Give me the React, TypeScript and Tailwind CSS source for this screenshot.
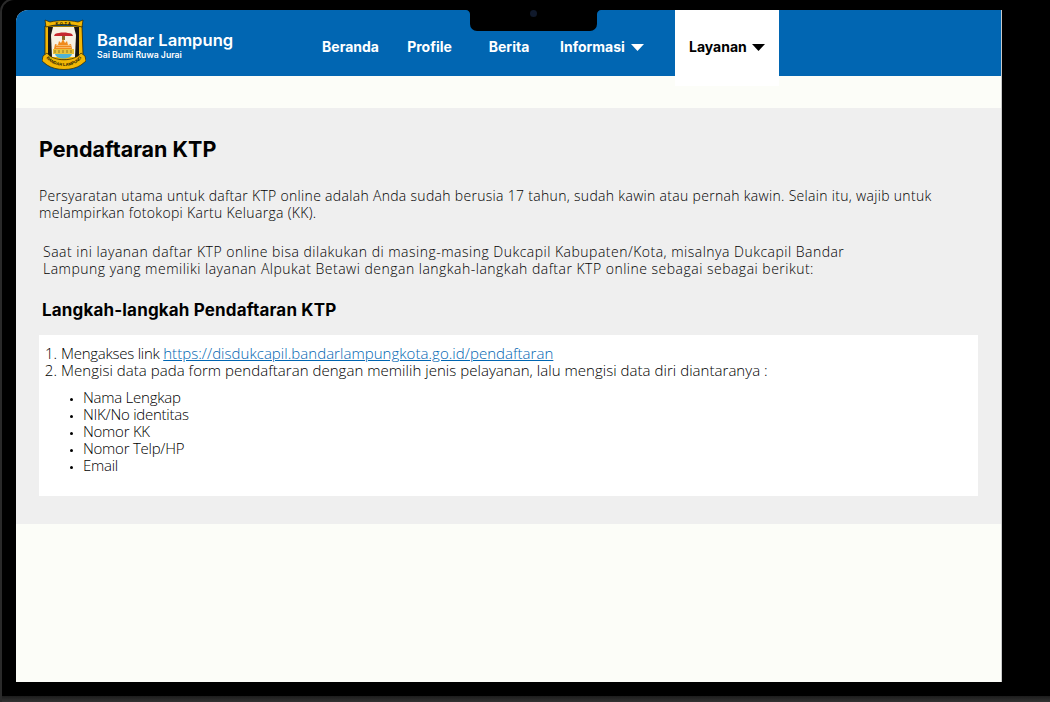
const navItems = [
  { label: 'Beranda', w: 'w-[85px]' },
  { label: 'Profile', w: 'w-[73px]' },
  { label: 'Berita', w: 'w-[86px]' },
];

function Caret({ color }: { color: string }) {
  return (
    <svg width="13" height="7" viewBox="0 0 13 7" className="ml-[6px]">
      <path d="M0 0h13L6.500 7z" fill={color} />
    </svg>
  );
}

function Logo() {
  return (
    <svg width="44" height="54" viewBox="0 0 44 54" className="block">
      {/* shield */}
      <path d="M3 8h37l1 28-3 6H6l-3-6z" fill="#f2b705" stroke="#2a2205" strokeWidth="0.8" />
      <path d="M6 9h31v30H6z" fill="#171512" />
      <path d="M11 9h21l2 8-1 22H10l-1-22z" fill="#f6f1e2" />
      {/* roof */}
      <path d="M13 16c5-2 12-2 17 0l1 2H12z" fill="#c5272d" />
      <path d="M20 18h3v4h-3z" fill="#8a6a2a" />
      {/* siger */}
      <path d="M12 31l1-5 3 1 1-4 2 2 2-4 2 4 2-2 1 4 3-1 1 5z" fill="#f08a1d" />
      <path d="M14 27.500h15M14 29.500h15" stroke="#fbd79a" strokeWidth="0.6" />
      {/* base */}
      <path d="M11 31h21v5H11z" fill="#e8c23a" />
      <path d="M13 32v3M17 32v3M21 32v3M25 32v3M29 32v3" stroke="#6b5a1c" strokeWidth="0.7" />
      <path d="M13 36h17c-1 6-16 6-17 0z" fill="#4fb3d4" />
      {/* top ribbon */}
      <path d="M3 2l5 2c9-2 19-2 28 0l5-2-1 7-4-1c-9-2-19-2 -28 0l-4 1z" fill="#f2b705" stroke="#2a2205" strokeWidth="0.7" />
      <text x="22" y="7.400" textAnchor="middle" fontSize="4" fontWeight="700" letterSpacing="1.500" fill="#1b1603" className="[font-family:'Liberation_Sans',sans-serif]">KOTA</text>
      {/* bottom ribbon */}
      <path d="M1 38l4-3c6 9 28 9 34 0l4 3 1 5-5 4c-9 6-25 6-34 0l-5-4z" fill="#f2b705" stroke="#2a2205" strokeWidth="0.7" />
      <path id="logo-arc" d="M4 39c7 12 29 12 36 0" fill="none" />
      <text fontSize="4.200" fontWeight="700" fill="#1b1603" className="[font-family:'Liberation_Sans',sans-serif]">
        <textPath href="#logo-arc" startOffset="50%" textAnchor="middle">BANDAR LAMPUNG</textPath>
      </text>
    </svg>
  );
}

export default function App() {
  return (
    <div className="h-[702px] w-[1050px] overflow-hidden bg-black relative [font-family:'Open_Sans',sans-serif]">
      <div className="absolute bottom-0 left-0 right-0 h-[6px] bg-gradient-to-b from-[#1c1c1c] to-[#343434]" />
      <div className="absolute left-0 top-[-2px] h-[706px] w-[60px] rounded-tl-[14px] border-l-2 border-t-2 border-[#2a2a2a]" />

      <div className="absolute left-[16px] top-[10px] h-[672px] w-[986px] overflow-hidden rounded-tl-[12px] border-r border-[#c9c9c9] bg-[#fcfdf8]">
        <header className="relative flex h-[66px] items-start bg-[#0166b2] text-white [font-family:Inter,sans-serif]">
          <div className="ml-[26px] mt-[8px]">
            <Logo />
          </div>
          <div className="ml-[11px] mt-[21px]">
            <div className="text-[16.600px] leading-[18px] font-semibold">Bandar Lampung</div>
            <div className="mt-[1px] text-[8.700px] leading-[10px] font-semibold">Sai Bumi Ruwa Jurai</div>
          </div>
          <nav className="absolute left-[292px] top-0 flex h-[66px] items-start text-[14px] font-bold">
            {navItems.map((item) => (
              <div key={item.label} className={`${item.w} pt-[29px] text-center leading-[16px]`}>
                {item.label}
              </div>
            ))}
            <div className="flex w-[123px] items-center pl-[8px] pt-[29px] leading-[16px]">
              Informasi
              <Caret color="#ffffff" />
            </div>
            <div className="h-[76px] w-[104px]">
              <div className="flex h-full items-start bg-white pl-[14px] pt-[29px] leading-[16px] text-black">
                Layanan
                <span className="-ml-[1px] mt-[5px]">
                  <Caret color="#000000" />
                </span>
              </div>
            </div>
          </nav>
        </header>

        <main className="mt-[32px] h-[416px] bg-[#efefef] px-[23px] pt-[28px] text-[14px] font-light leading-[17px] text-black">
          <h1 className="text-[21.500px] leading-[26px] font-bold [font-family:Inter,sans-serif]">Pendaftaran KTP</h1>
          <p className="mt-[25px] w-[930px] tracking-[0.31px]">
            Persyaratan utama untuk daftar KTP online adalah Anda sudah berusia 17 tahun, sudah kawin atau pernah kawin. Selain itu, wajib untuk melampirkan fotokopi Kartu Keluarga (KK).
          </p>
          <p className="mt-[22px] ml-[4px] w-[820px] tracking-[0.49px]">
            Saat ini layanan daftar KTP online bisa dilakukan di masing-masing Dukcapil Kabupaten/Kota, misalnya Dukcapil Bandar Lampung yang memiliki layanan Alpukat Betawi dengan langkah-langkah daftar KTP online sebagai sebagai berikut:
          </p>
          <h2 className="mt-[22px] ml-[3px] text-[17px] leading-[22px] font-bold tracking-[0.16px] [font-family:Inter,sans-serif]">Langkah-langkah Pendaftaran KTP</h2>
          <div className="mt-[14px] h-[161px] w-[939px] bg-white pt-[10px] text-[15px]">
            <ol className="list-decimal pl-[22px]">
              <li>
                <span className="tracking-[-0.25px]">Mengakses link </span>
                <a className="tracking-[0.04px] text-[#0166b2] underline">https://disdukcapil.bandarlampungkota.go.id/pendaftaran</a>
              </li>
              <li className="tracking-[0.04px]">Mengisi data pada form pendaftaran dengan memilih jenis pelayanan, lalu mengisi data diri diantaranya :</li>
            </ol>
            <ul className="mt-[10px] list-disc pl-[44px] tracking-[-0.25px] marker:text-[8px]">
              <li>Nama Lengkap</li>
              <li>NIK/No identitas</li>
              <li>Nomor KK</li>
              <li>Nomor Telp/HP</li>
              <li>Email</li>
            </ul>
          </div>
        </main>
      </div>

      {/* camera notch */}
      <div className="absolute left-[470px] top-0 flex h-[31px] w-[127px] justify-center rounded-b-[7px] bg-black pt-[10px]">
        <div className="h-[7px] w-[7px] rounded-full bg-[#10192b]" />
      </div>
      <svg width="4" height="4" viewBox="0 0 4 4" className="absolute left-[466px] top-[10px]">
        <path d="M0 0h4v4c0-2-2-4-4-4z" fill="#000000" />
      </svg>
      <svg width="4" height="4" viewBox="0 0 4 4" className="absolute left-[597px] top-[10px]">
        <path d="M4 0H0v4c0-2 2-4 4-4z" fill="#000000" />
      </svg>
    </div>
  );
}
